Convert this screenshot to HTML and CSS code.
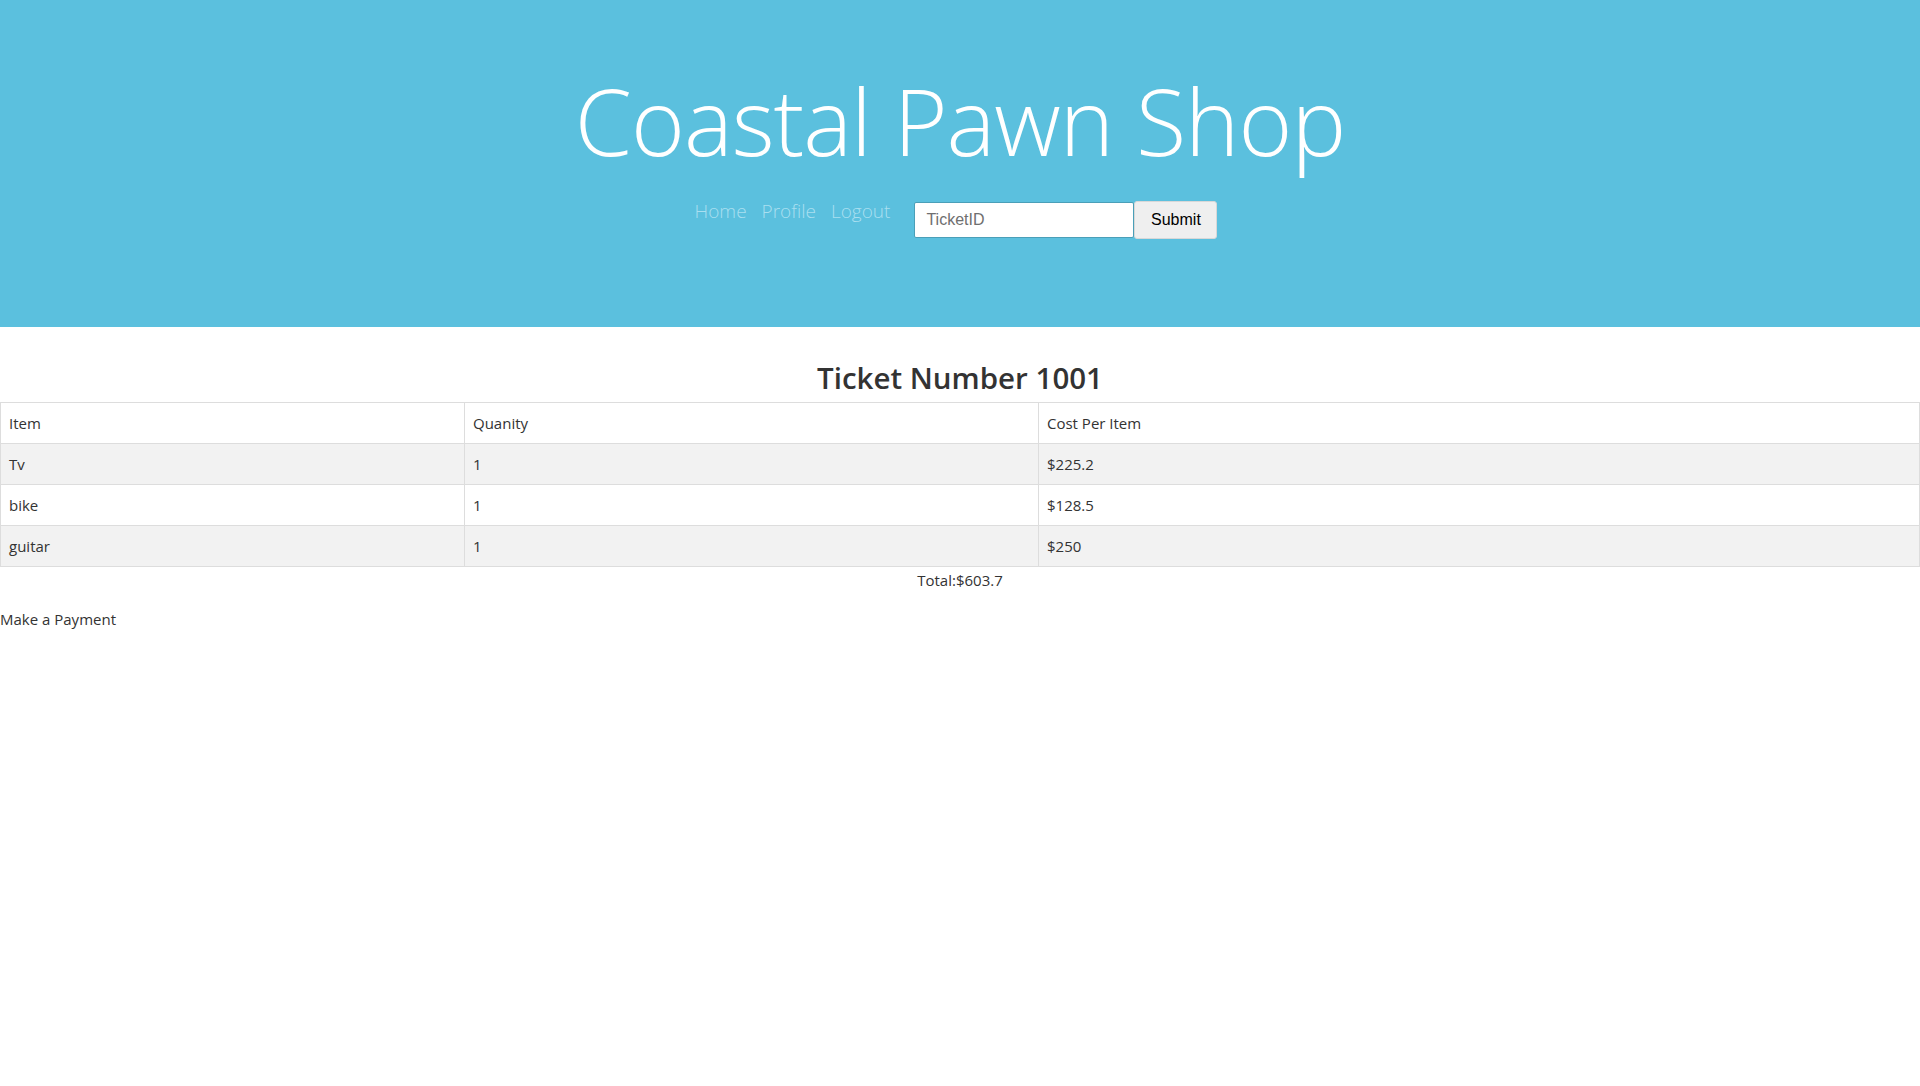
FILE: index.html
```html
<!DOCTYPE html>
<html lang="en">
<head>
<meta charset="utf-8">
<title>Coastal Pawn Shop</title>
<link rel="stylesheet" href="styles.css">
</head>
<body>
<header class="jumbotron">
  <h1 class="brand">Coastal Pawn Shop</h1>
  <nav class="nav">
    <a class="nav-link" href="#">Home</a>
    <a class="nav-link" href="#">Profile</a>
    <a class="nav-link" href="#">Logout</a>
    <form class="search">
      <input class="search-input" type="text" placeholder="TicketID">
      <button class="search-btn" type="button">Submit</button>
    </form>
  </nav>
</header>
<main class="content">
  <h2 class="ticket-title">Ticket Number 1001</h2>
  <table class="ticket-table">
    <thead>
      <tr><th class="col-item">Item</th><th class="col-qty">Quanity</th><th>Cost Per Item</th></tr>
    </thead>
    <tbody>
      <tr class="odd"><td>Tv</td><td>1</td><td>$225.2</td></tr>
      <tr><td>bike</td><td>1</td><td>$128.5</td></tr>
      <tr class="odd"><td>guitar</td><td>1</td><td>$250</td></tr>
    </tbody>
  </table>
  <p class="total">Total:$603.7</p>
  <p class="pay">Make a Payment</p>
</main>
</body>
</html>
```
FILE: styles.css
```css
html, body {
  margin: 0;
  padding: 0;
  background: #fff;
}
body {
  font-family: "Open Sans", "Noto Sans", sans-serif;
  font-size: 15px;
  color: #333;
}
.jumbotron {
  background: #5bc0de;
  height: 327px;
  box-sizing: border-box;
  padding-top: 58px;
  display: flex;
  flex-direction: column;
  align-items: center;
}
.brand {
  margin: 0;
  font-family: "Open Sans", sans-serif;
  font-weight: 300;
  font-size: 92px;
  line-height: 126px;
  color: #fff;
  letter-spacing: -1px;
}
.nav {
  display: flex;
  align-items: flex-start;
  margin-top: 16px;
  margin-left: -8px;
}
.nav-link {
  color: #a9dff0;
  text-decoration: none;
  font-weight: 300;
  font-size: 19px;
  line-height: 26px;
  margin-right: 15px;
  margin-top: -2px;
}
.nav-link:last-of-type {
  margin-right: 24px;
}
.search {
  display: flex;
  margin: 0;
}
.search-input {
  width: 220px;
  height: 36px;
  box-sizing: border-box;
  border: 1px solid #4a9fb8;
  border-radius: 2px;
  padding: 0 11px;
  font-family: "Liberation Sans", Arial, sans-serif;
  font-size: 16px;
  color: #333;
  background: #fff;
  margin-top: 2px;
}
.search-input::placeholder {
  color: #6f6f6f;
}
.search-btn {
  width: 83px;
  height: 38px;
  box-sizing: border-box;
  border: 1px solid #d8d8d8;
  border-radius: 3px;
  background: #efefef;
  font-family: "Liberation Sans", Arial, sans-serif;
  font-size: 16px;
  color: #000;
  padding: 0;
  margin-top: 1px;
}
.content {
  padding-top: 29px;
}
.ticket-title {
  margin: 0 0 2px;
  text-align: center;
  font-weight: 600;
  font-size: 29.5px;
  line-height: 44px;
  color: #333;
}
.ticket-table {
  width: 100%;
  border-collapse: collapse;
  font-size: 15px;
}
.ticket-table th,
.ticket-table td {
  border: 1px solid #ddd;
  padding: 8px 8px;
  line-height: 24px;
  text-align: left;
  font-weight: 400;
}
.ticket-table .col-item { width: 447px; }
.ticket-table .col-qty { width: 557px; }
.ticket-table tr.odd td { background: #f2f2f2; }
.total {
  margin: 0;
  text-align: center;
  line-height: 24px;
  padding-top: 1px;
}
.pay {
  margin: 15px 0 0;
  line-height: 24px;
}
```
